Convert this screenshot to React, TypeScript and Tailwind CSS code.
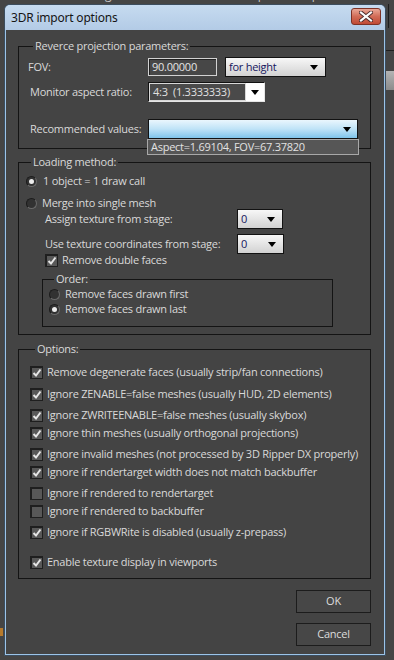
import React from "react";

const Arrow = () => (
  <svg width="8" height="5" viewBox="0 0 8 5" className="shrink-0">
    <path d="M0 0 H8 L4 5 Z" fill="#000" />
  </svg>
);

function LightSelect({ value, width }: { value: string; width: string }) {
  return (
    <div
      className={`flex h-[20px] ${width} items-center justify-between border border-[#121212] bg-linear-to-b from-[#f7f7f7] to-[#d2d2d2] pl-[3px] pr-[7px] text-[#15155e]`}
    >
      <span>{value}</span>
      <Arrow />
    </div>
  );
}

function Check({ checked }: { checked: boolean }) {
  return (
    <span className="flex h-[13px] w-[13px] shrink-0 items-center justify-center border border-t-2 border-l-2 border-[#1f1f1f] bg-[#585858]">
      {checked && (
        <svg width="10" height="10" viewBox="0 0 10 10">
          <path d="M1.5 5 L4 7.5 L8.5 1.5" stroke="#e6e6e6" strokeWidth="2" fill="none" />
        </svg>
      )}
    </span>
  );
}

function Radio({ on }: { on: boolean }) {
  return (
    <span className="flex h-[11px] w-[11px] shrink-0 items-center justify-center rounded-full border border-[#6a6a6a] border-t-[#1c1c1c] border-l-[#1c1c1c] bg-[#323232]">
      {on && <span className="h-[5px] w-[5px] rounded-full bg-[#ececec]" />}
    </span>
  );
}

const options = [
  { label: "Remove degenerate faces (usually strip/fan connections)", on: true, mt: "mt-0" },
  { label: "Ignore ZENABLE=false meshes (usually HUD, 2D elements)", on: true, mt: "mt-[4px]" },
  { label: "Ignore ZWRITEENABLE=false meshes (usually skybox)", on: true, mt: "mt-[3px]" },
  { label: "Ignore thin meshes (usually orthogonal projections)", on: true, mt: "mt-0" },
  { label: "Ignore invalid meshes (not processed by 3D Ripper DX properly)", on: true, mt: "mt-[3px]" },
  { label: "Ignore if rendertarget width does not match backbuffer", on: true, mt: "mt-0" },
  { label: "Ignore if rendered to rendertarget", on: false, mt: "mt-[3px]" },
  { label: "Ignore if rendered to backbuffer", on: false, mt: "mt-0" },
  { label: "Ignore if RGBWRite is disabled (usually z-prepass)", on: true, mt: "mt-[3px]" },
  { label: "Enable texture display in viewports", on: true, mt: "mt-[12px]" },
];

export default function App() {
  return (
    <div className="relative h-[660px] w-[394px] overflow-hidden whitespace-nowrap bg-[#454545] font-['Open_Sans',sans-serif] text-[11px] tracking-[-0.25px] text-[#d9d9d9]">
      {/* max window behind */}
      <div className="absolute left-0 top-[-10px] flex h-[14px] w-full items-end text-[12px] text-[#c8c8c8]">
        <span className="ml-[-16px] w-[72px]">Editors</span>
        <span className="w-[78px]">Rendering</span>
        <span className="w-[80px]">Customize</span>
        <span className="w-[80px]">MAXScript</span>
        <span>Help</span>
      </div>
      <div className="absolute right-0 top-[50px] h-px w-[8px] bg-[#1e1e1e]" />
      <div className="absolute right-0 top-[71px] h-[19px] w-[8px] bg-linear-to-b from-[#b4b4b4] to-[#8c8c8c]" />
      <div className="absolute right-[5px] top-[4px] h-[24px] w-px bg-[#1e1e1e]" />
      <div className="absolute left-0 top-[628px] h-[8px] w-[3px] bg-[#b67a2c]" />

      {/* dialog */}
      <div className="absolute left-[4px] top-[4px] flex h-[652px] w-[382px] flex-col rounded-t-[6px] border border-[#3c4d5e] bg-[#9cc4e8]">
        <div className="relative flex h-[25px] shrink-0 items-center rounded-t-[5px] bg-linear-to-b from-[#c6dbf0] to-[#b3cbe6] pl-[6px] font-['Noto_Sans',sans-serif] text-[12px] tracking-[-0.2px] text-[#151515]">
          3DR import options
          <div className="absolute right-[4px] top-[3px] flex h-[17px] w-[30px] items-center justify-center rounded-[3px] border border-[#7d3226] bg-linear-to-b from-[#e9a797] via-[#d16b56] to-[#c04a34]">
            <svg width="14" height="11" viewBox="0 0 14 11">
              <path d="M2 1.5 L12 9.5 M12 1.5 L2 9.5" stroke="#4a2a2a" strokeWidth="4" strokeLinecap="square" />
              <path d="M2 1.5 L12 9.5 M12 1.5 L2 9.5" stroke="#fbfbfb" strokeWidth="2.2" strokeLinecap="square" />
            </svg>
          </div>
        </div>

        <div className="mx-px mb-px flex flex-1 flex-col bg-[#444444] pl-[12px] pt-[9px]">
          {/* Reverce projection */}
          <fieldset className="w-[353px] border border-[#141414] pb-[9px] pl-[9px]">
            <legend className="ml-[5px] px-[2px] leading-[14px]">Reverce projection parameters:</legend>
            <div className="mt-[4px] flex h-[20px] items-center">
              <span className="w-[120px]">FOV:</span>
              <div className="flex h-[18px] w-[69px] items-center border border-[#d2d2d2] bg-[#474747] pl-[3px] text-[#e4e4e4] shadow-[inset_1px_1px_0_#222]">
                90.00000
              </div>
              <div className="ml-[8px]">
                <LightSelect value="for height" width="w-[101px]" />
              </div>
            </div>
            <div className="mt-[5px] flex h-[20px] items-center pl-[2px]">
              <span className="w-[118px]">Monitor aspect ratio:</span>
              <div className="flex h-[20px] w-[117px] items-center border border-[#111] border-r-[#e6e6e6] border-b-[#e6e6e6]">
                <div className="flex h-full flex-1 items-center border border-[#d8d8d8] bg-[#4a4a4a] pl-[3px] text-[#e0e0e0]">
                  4:3&nbsp;&nbsp;(1.3333333)
                </div>
                <div className="flex h-full w-[18px] items-center justify-center bg-white">
                  <Arrow />
                </div>
              </div>
            </div>
            <div className="mt-[17px] flex h-[20px] items-center pl-[2px]">
              <span className="w-[118px]">Recommended values:</span>
              <div className="relative">
                <div className="flex h-[20px] w-[210px] items-center justify-end border border-[#121212] bg-linear-to-b from-[#eaf6fd] via-[#bfe3f7] to-[#7fc4ea] pr-[6px]">
                  <Arrow />
                </div>
                <div className="absolute left-[-1px] top-[20px] z-10 flex h-[16px] w-[212px] items-center border border-[#a8a8a8] bg-[#565656] pl-[3px] text-[#e2e2e2]">
                  Aspect=1.69104, FOV=67.37820
                </div>
              </div>
            </div>
          </fieldset>

          {/* Loading method */}
          <fieldset className="mt-[6px] w-[353px] border border-[#141414] pb-[7px] pl-[7px]">
            <legend className="ml-[5px] px-[2px] leading-[14px]">Loading method:</legend>
            <div className="mt-[6px] flex h-[12px] items-center gap-[6px]">
              <Radio on />
              <span>1 object = 1 draw call</span>
            </div>
            <div className="mt-[10px] flex h-[12px] items-center gap-[5px]">
              <Radio on={false} />
              <span>Merge into single mesh</span>
            </div>
            <div className="flex h-[20px] items-center pl-[19px]">
              <span className="w-[192px]">Assign texture from stage:</span>
              <LightSelect value="0" width="w-[46px]" />
            </div>
            <div className="mt-[5px] flex h-[20px] items-center pl-[19px]">
              <span className="w-[192px]">Use texture coordinates from stage:</span>
              <LightSelect value="0" width="w-[47px]" />
            </div>
            <div className="flex h-[13px] items-center gap-[4px] pl-[19px]">
              <Check checked />
              <span>Remove double faces</span>
            </div>
            <fieldset className="ml-[16px] mt-[5px] w-[291px] border border-[#141414] pb-[11px] pl-[6px]">
              <legend className="ml-[5px] px-[2px] leading-[14px]">Order:</legend>
              <div className="mt-[2px] flex h-[12px] items-center gap-[5px]">
                <Radio on={false} />
                <span>Remove faces drawn first</span>
              </div>
              <div className="mt-[3px] flex h-[12px] items-center gap-[5px]">
                <Radio on />
                <span>Remove faces drawn last</span>
              </div>
            </fieldset>
          </fieldset>

          {/* Options */}
          <fieldset className="mt-[7px] w-[353px] border border-[#141414] pb-[7px] pl-[11px] pt-[7px]">
            <legend className="ml-[5px] px-[2px] leading-[14px]">Options:</legend>
            {options.map((o) => (
              <div key={o.label} className={`${o.mt} flex h-[18px] items-center gap-[4px]`}>
                <Check checked={o.on} />
                <span>{o.label}</span>
              </div>
            ))}
          </fieldset>

          <div className="mr-[13px] mt-[11px] flex flex-col items-end gap-[10px]">
            <button className="h-[23px] w-[75px] border border-[#1c1c1c] bg-[#474747] text-[#dcdcdc]">OK</button>
            <button className="h-[23px] w-[75px] border border-[#1c1c1c] bg-[#474747] text-[#dcdcdc]">Cancel</button>
          </div>
        </div>
      </div>
    </div>
  );
}
